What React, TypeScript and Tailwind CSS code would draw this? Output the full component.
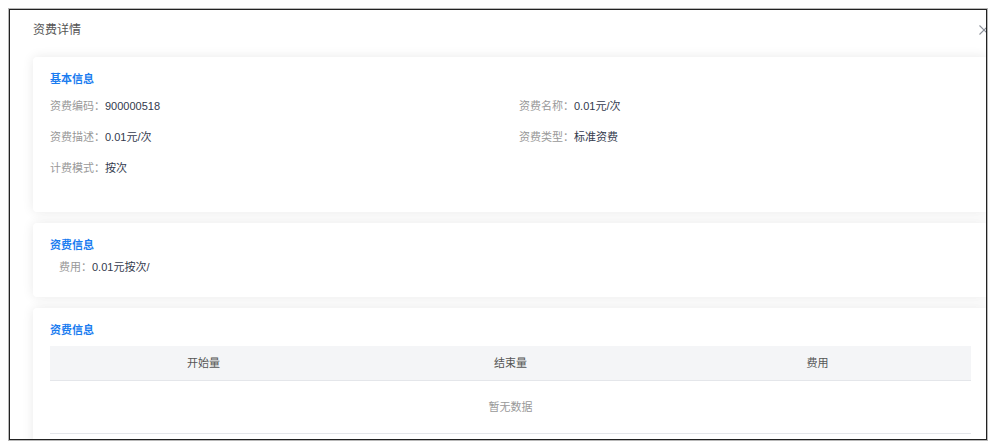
import React from "react";

const font = { fontFamily: '"Liberation Sans", "Noto Sans CJK SC", sans-serif' };

function Field({ label, value }: { label: string; value: string }) {
  return (
    <div className="flex h-[31px] items-center whitespace-nowrap">
      <span className="text-[#999]">{label}</span>
      <span className="text-[#333a4d]">{value}</span>
    </div>
  );
}

function SectionTitle({ children }: { children: React.ReactNode }) {
  return <div className="text-[11px] font-bold leading-[16px] text-[#1a7cf0]">{children}</div>;
}

export default function App() {
  return (
    <div className="h-[448px] w-[995px] bg-white pl-[8px] pt-[8px]" style={font}>
      <div className="h-[433px] w-[980px] border border-[#b8b8b8]">
        <div className="h-full w-full overflow-hidden border border-[#222] bg-white">
          <div className="flex h-[39px] w-[980px] items-center pl-[23px]">
            <span className="text-[12px] text-[#555]">资费详情</span>
            <svg className="ml-auto" width="12" height="12" viewBox="0 0 12 12">
              <path d="M1.5 1.5 L10.5 10.5 M10.5 1.5 L1.5 10.5" stroke="#8a8f99" strokeWidth="1.1" fill="none" />
            </svg>
          </div>
          <div className="flex flex-col gap-[11px] pl-[23px] pt-[8px] text-[11px]">
            <div className="w-[955px] shrink-0 rounded-[4px] bg-white pb-[28px] pl-[17px] pt-[14px] shadow-[0_0_12px_rgba(0,0,0,0.09)]">
              <SectionTitle>基本信息</SectionTitle>
              <div className="mt-[4px] grid grid-cols-[469px_1fr]">
                <Field label="资费编码：" value=" 900000518" />
                <Field label="资费名称：" value=" 0.01元/次" />
                <Field label="资费描述：" value="0.01元/次" />
                <Field label="资费类型：" value="标准资费" />
                <Field label="计费模式：" value="按次" />
              </div>
            </div>
            <div className="w-[955px] shrink-0 rounded-[4px] bg-white pb-[16px] pl-[17px] pt-[14px] shadow-[0_0_12px_rgba(0,0,0,0.09)]">
              <SectionTitle>资费信息</SectionTitle>
              <div className="flex h-[28px] items-center pl-[9px] whitespace-nowrap">
                <span className="text-[#999]">费用：</span>
                <span className="text-[#333a4d]">0.01元按次/</span>
              </div>
            </div>
            <div className="w-[955px] shrink-0 rounded-[4px] bg-white pb-[20px] pl-[17px] pt-[14px] shadow-[0_0_12px_rgba(0,0,0,0.09)]">
              <SectionTitle>资费信息</SectionTitle>
              <div className="mt-[8px] w-[921px]">
                <div className="grid h-[35px] grid-cols-3 items-center border-b border-[#e4e6ea] bg-[#f4f5f7] text-center text-[#555]">
                  <span>开始量</span>
                  <span>结束量</span>
                  <span>费用</span>
                </div>
                <div className="flex h-[53px] items-center justify-center border-b border-[#e4e6ea] text-[#999]">
                  暂无数据
                </div>
              </div>
            </div>
          </div>
        </div>
      </div>
    </div>
  );
}
